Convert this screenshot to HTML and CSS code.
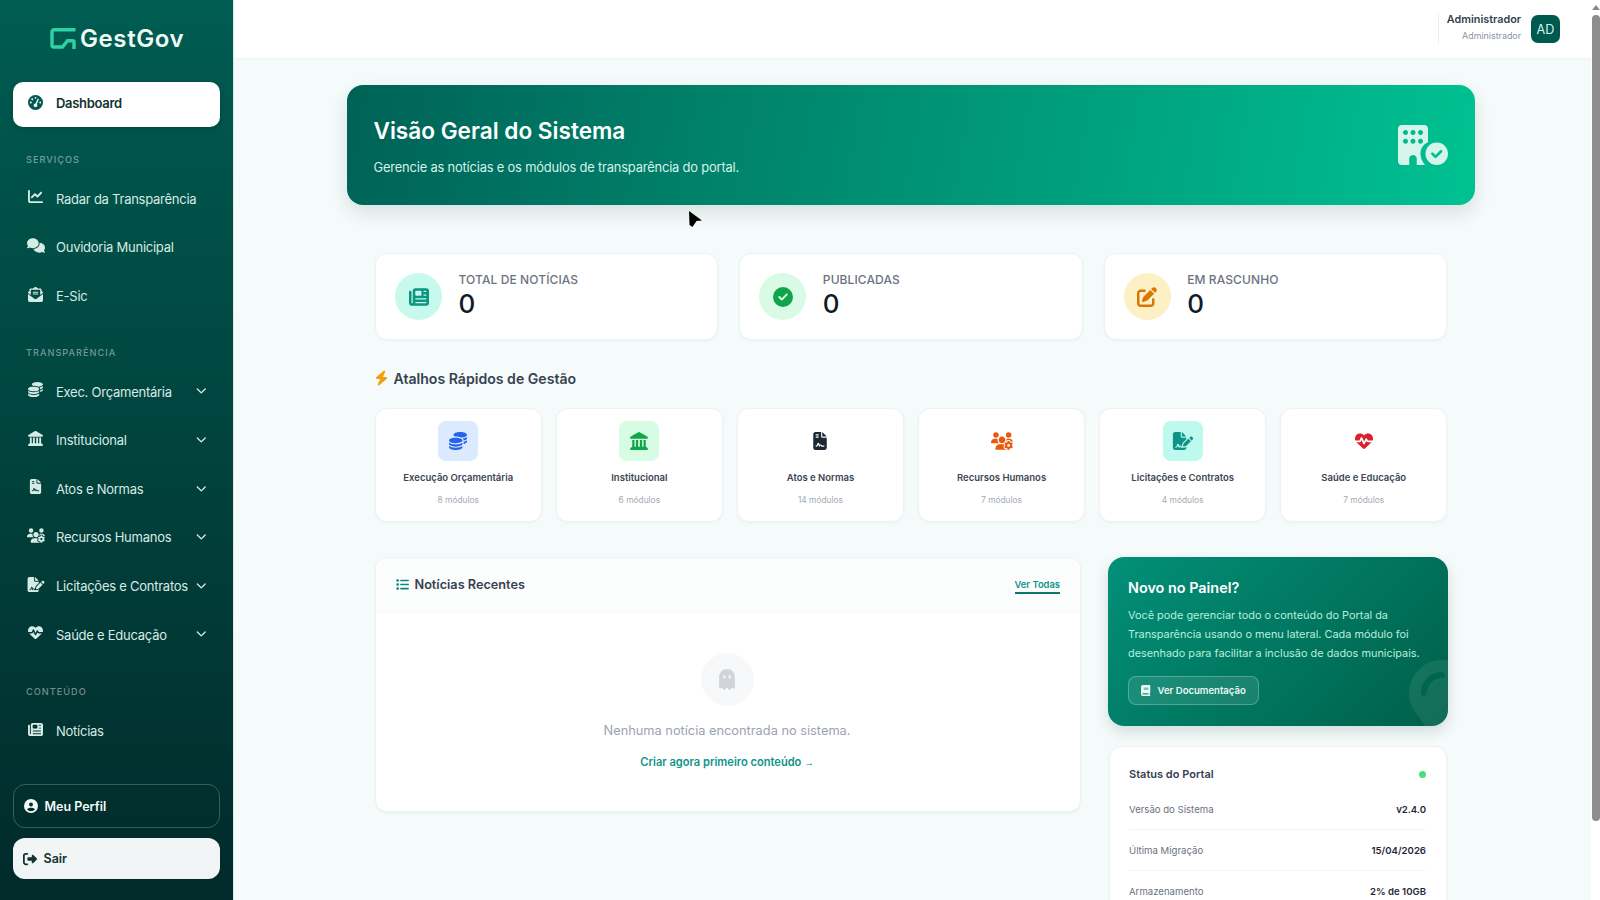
FILE: index.html
```html
<!DOCTYPE html>
<html lang="pt-BR">
<head>
<meta charset="utf-8">
<title>GestGov</title>
<link rel="stylesheet" href="styles.css">
</head>
<body>
<svg class="defs" aria-hidden="true">
<symbol id="i-gauge" viewBox="0 0 512 512"><path d="M0 256a256 256 0 1 1 512 0A256 256 0 1 1 0 256zM288 96a32 32 0 1 0 -64 0 32 32 0 1 0 64 0zM256 416c35.3 0 64-28.7 64-64c0-17.4-6.9-33.1-18.1-44.6L366 161.7c5.3-12.1-.2-26.3-12.3-31.6s-26.3 .2-31.6 12.3L257.9 288c-.6 0-1.3 0-1.9 0c-35.3 0-64 28.7-64 64s28.7 64 64 64zM176 144a32 32 0 1 0 -64 0 32 32 0 1 0 64 0zM96 288a32 32 0 1 0 0-64 32 32 0 1 0 0 64zm352-32a32 32 0 1 0 -64 0 32 32 0 1 0 64 0z"/></symbol>
<symbol id="i-chart" viewBox="0 0 512 512"><path d="M64 64c0-17.7-14.3-32-32-32S0 46.3 0 64V400c0 44.2 35.8 80 80 80H480c17.7 0 32-14.3 32-32s-14.3-32-32-32H80c-8.8 0-16-7.2-16-16V64zm406.6 86.6c12.5-12.5 12.5-32.8 0-45.3s-32.8-12.5-45.3 0L320 210.7l-57.4-57.4c-12.5-12.5-32.8-12.5-45.3 0l-112 112c-12.5 12.5-12.5 32.8 0 45.3s32.8 12.5 45.3 0L240 221.3l57.4 57.4c12.5 12.5 32.8 12.5 45.3 0l128-128z"/></symbol>
<symbol id="i-comments" viewBox="0 0 640 512"><path d="M208 352c114.9 0 208-78.8 208-176S322.9 0 208 0S0 78.8 0 176c0 38.6 14.7 74.3 39.6 103.4c-3.5 9.4-8.7 17.7-14.2 24.7c-4.8 6.2-9.7 11-13.3 14.3c-1.8 1.6-3.3 2.9-4.3 3.7c-.5 .4-.9 .7-1.1 .8l-.2 .2 0 0 0 0C1 327.2-1.4 334.4 .8 340.9S9.1 352 16 352c21.8 0 43.8-5.6 62.1-12.5c9.2-3.5 17.8-7.4 25.3-11.4C134.1 343.3 169.8 352 208 352zM448 176c0 112.3-99.1 196.9-216.5 207C255.8 457.4 336.4 512 432 512c38.2 0 73.9-8.7 104.7-23.9c7.5 4 16 7.9 25.2 11.4c18.3 6.9 40.3 12.5 62.1 12.5c6.9 0 13.1-4.5 15.2-11.1c2.1-6.6-.2-13.8-5.8-17.9l0 0 0 0-.2-.2c-.2-.2-.6-.4-1.1-.8c-1-.8-2.5-2-4.3-3.7c-3.6-3.3-8.5-8.1-13.3-14.3c-5.5-7-10.7-15.4-14.2-24.7c24.9-29 39.6-64.7 39.6-103.4c0-92.8-84.9-168.9-192.6-175.5c.4 5.1 .6 10.3 .6 15.5z"/></symbol>
<symbol id="i-envelope" viewBox="0 0 512 512"><path d="M215.4 96H144 107.8 96v8.8V144v40.4 89L.2 202.5c1.6-18.1 10.9-34.9 25.7-45.8L48 140.3V96c0-26.5 21.5-48 48-48h76.6l49.9-36.9C232.2 3.9 243.9 0 256 0s23.8 3.9 33.5 11L339.4 48H416c26.5 0 48 21.5 48 48v44.3l22.1 16.4c14.8 10.9 24.1 27.7 25.7 45.8L416 273.4v-89V144 104.8 96H404.2 368 296.6 215.4zM0 448V242.1L217.6 403.3c11.1 8.2 24.6 12.7 38.4 12.7s27.3-4.4 38.4-12.7L512 242.1V448v0c0 35.3-28.7 64-64 64H64c-35.3 0-64-28.7-64-64v0zM176 160H336c8.8 0 16 7.2 16 16s-7.2 16-16 16H176c-8.8 0-16-7.2-16-16s7.2-16 16-16zm0 64H336c8.8 0 16 7.2 16 16s-7.2 16-16 16H176c-8.8 0-16-7.2-16-16s7.2-16 16-16z"/></symbol>
<symbol id="i-coins" viewBox="0 0 512 512"><path d="M512 80c0 18-14.3 34.6-38.4 48c-29.1 16.1-72.5 27.5-122.3 30.9c-3.7-1.8-7.4-3.5-11.3-5C300.6 137.4 248.2 128 192 128c-8.3 0-16.4 .2-24.5 .6l-1.1-.6C142.3 114.6 128 98 128 80c0-44.2 86-80 192-80S512 35.8 512 80zM160.7 161.1c10.2-.7 20.7-1.1 31.3-1.1c62.2 0 117.4 12.3 152.5 31.4C369.3 204.9 384 221.7 384 240c0 4-.7 7.9-2.1 11.7c-4.6 13.2-17 25.3-35 35.5c0 0 0 0 0 0c-.1 .1-.3 .1-.4 .2l0 0 0 0c-.3 .2-.6 .3-.9 .5c-35 19.4-90.8 32-153.6 32c-59.6 0-112.9-11.3-148.2-29.1c-1.9-.9-3.7-1.9-5.5-2.9C14.3 274.6 0 258 0 240c0-34.8 53.4-64.5 128-75.4c10.5-1.5 21.4-2.7 32.7-3.5zM416 240c0-21.9-10.6-39.9-24.1-53.4c28.3-4.4 54.2-11.4 76.2-20.5c16.3-6.8 31.5-15.2 43.9-25.5V176c0 19.3-16.5 37.1-43.8 50.9c-14.6 7.4-32.4 13.7-52.4 18.5c.1-1.8 .2-3.5 .2-5.3zm-32 96c0 18-14.3 34.6-38.4 48c-1.8 1-3.6 1.9-5.5 2.9C304.9 404.7 251.6 416 192 416c-62.8 0-118.6-12.6-153.6-32C14.3 370.6 0 354 0 336V300.6c12.5 10.3 27.6 18.7 43.9 25.5C83.4 342.6 135.8 352 192 352s108.6-9.4 148.1-25.9c7.8-3.2 15.3-6.9 22.4-10.9c6.1-3.4 11.8-7.2 17.2-11.2c1.5-1.1 2.9-2.3 4.3-3.4V304v5.7V336zm32 0V304 278.1c19-4.2 36.5-9.5 52.1-16c16.3-6.8 31.5-15.2 43.9-25.5V272c0 10.5-5 21-14.9 30.9c-16.3 16.3-45 29.7-81.3 38.4c.1-1.7 .2-3.5 .2-5.3zM192 448c56.2 0 108.6-9.4 148.1-25.9c16.3-6.8 31.5-15.2 43.9-25.5V432c0 44.2-86 80-192 80S0 476.2 0 432V396.6c12.5 10.3 27.6 18.7 43.9 25.5C83.4 438.6 135.8 448 192 448z"/></symbol>
<symbol id="i-landmark" viewBox="0 0 512 512"><path d="M240.1 4.2c9.8-5.6 21.9-5.6 31.8 0l171.8 98.1L448 104l0 .9 47.9 27.4c12.6 7.2 18.8 22 15.1 36s-16.4 23.8-30.9 23.8H32c-14.5 0-27.2-9.8-30.9-23.8s2.5-28.8 15.1-36L64 104.9V104l4.4-1.6L240.1 4.2zM64 224h64V416h40V224h64V416h48V224h64V416h40V224h64V420.3c.6 .3 1.2 .7 1.8 1.1l48 32c11.7 7.8 17 22.4 12.9 35.9S494.1 512 480 512H32c-14.1 0-26.5-9.2-30.6-22.7s1.1-28.1 12.9-35.9l48-32c.6-.4 1.2-.7 1.8-1.1V224z"/></symbol>
<symbol id="i-contract" viewBox="0 0 384 512"><path d="M64 0C28.7 0 0 28.7 0 64V448c0 35.3 28.7 64 64 64H320c35.3 0 64-28.7 64-64V160H256c-17.7 0-32-14.3-32-32V0H64zM256 0V128H384L256 0zM80 64h64c8.8 0 16 7.2 16 16s-7.2 16-16 16H80c-8.8 0-16-7.2-16-16s7.2-16 16-16zm0 64h64c8.8 0 16 7.2 16 16s-7.2 16-16 16H80c-8.8 0-16-7.2-16-16s7.2-16 16-16zm54.2 253.8c-6.1 20.3-24.8 34.2-46 34.2H80c-8.8 0-16-7.2-16-16s7.2-16 16-16h8.2c7.1 0 13.3-4.6 15.3-11.4l14.9-49.5c3.4-11.3 13.8-19.1 25.6-19.1s22.2 7.7 25.6 19.1l11.6 38.6c7.4-6.2 16.8-9.7 26.8-9.7c15.9 0 30.4 9 37.5 23.2l4.4 8.8H304c8.8 0 16 7.2 16 16s-7.2 16-16 16H240c-6.1 0-11.6-3.4-14.3-8.8l-8.8-17.7c-1.7-3.4-5.1-5.5-8.8-5.5s-7.2 2.1-8.8 5.5l-8.8 17.7c-2.9 5.9-9.2 9.4-15.7 8.8s-12.1-5.1-13.9-11.3L144 349l-9.8 32.8z"/></symbol>
<symbol id="i-users" viewBox="0 0 640 512"><path d="M144 160A80 80 0 1 0 144 0a80 80 0 1 0 0 160zm368 0A80 80 0 1 0 512 0a80 80 0 1 0 0 160zM0 298.7C0 310.4 9.6 320 21.3 320H234.7c.2 0 .4 0 .7 0c-26.6-23.5-43.3-57.8-43.3-96c0-7.6 .7-15 1.9-22.3c-13.6-6.3-28.7-9.7-44.6-9.7H106.7C47.8 192 0 239.8 0 298.7zM320 320c24 0 45.9-8.8 62.7-23.3c2.5-3.7 5.2-7.3 8-10.7c2.7-3.3 5.7-6.1 9-8.3C410 262.3 416 243.9 416 224c0-53-43-96-96-96s-96 43-96 96s43 96 96 96zm65.4 60.2c-10.3-5.9-18.1-16.2-20.8-28.2H261.3C187.7 352 128 411.7 128 485.3c0 14.7 11.9 26.7 26.7 26.7H455.2c-2.1-5.2-3.2-10.9-3.2-16.4v-3c-1.3-.7-2.7-1.5-4-2.3l-2.6 1.5c-16.8 9.7-40.5 8-54.7-9.7c-4.5-5.6-8.6-11.5-12.4-17.6l-.1-.2-.1-.2-2.4-4.1-.1-.2-.1-.2c-3.4-6.2-6.4-12.6-9-19.3c-8.2-21.2 2.2-42.6 19-52.3l2.7-1.5c0-.8 0-1.5 0-2.3s0-1.5 0-2.3l-2.7-1.5zM533.3 192H490.7c-15.9 0-31 3.5-44.6 9.7c1.3 7.2 1.9 14.7 1.9 22.3c0 17.4-3.5 33.9-9.7 49c2.5 .9 4.9 2 7.1 3.3l2.6 1.5c1.3-.8 2.6-1.6 4-2.3v-3c0-19.4 13.3-39.1 35.8-42.6c7.9-1.2 16-1.9 24.2-1.9s16.3 .6 24.2 1.9c22.5 3.5 35.8 23.2 35.8 42.6v3c1.3 .7 2.7 1.5 4 2.3l2.6-1.5c16.8-9.7 40.5-8 54.7 9.7c2.3 2.8 4.5 5.8 6.6 8.7c-2.1-57.1-49-102.7-106.6-102.7zm91.3 163.9c6.3-3.6 9.5-11.1 6.8-18c-2.1-5.5-4.6-10.8-7.4-15.9l-2.3-4c-3.1-5.1-6.5-9.9-10.2-14.5c-4.6-5.7-12.7-6.7-19-3l-2.9 1.7c-9.2 5.3-20.4 4-29.6-1.3s-16.1-14.5-16.1-25.1v-3.4c0-7.3-4.9-13.8-12.1-14.9c-6.5-1-13.1-1.5-19.9-1.5s-13.4 .5-19.9 1.5c-7.2 1.1-12.1 7.6-12.1 14.9v3.4c0 10.6-6.9 19.8-16.1 25.1s-20.4 6.6-29.6 1.3l-2.9-1.7c-6.3-3.6-14.4-2.6-19 3c-3.7 4.6-7.1 9.5-10.2 14.6l-2.3 3.9c-2.8 5.1-5.3 10.4-7.4 15.9c-2.6 6.8 .5 14.3 6.8 17.9l2.9 1.7c9.2 5.3 13.7 15.8 13.7 26.4s-4.5 21.1-13.7 26.4l-3 1.7c-6.3 3.6-9.5 11.1-6.8 17.9c2.1 5.5 4.6 10.7 7.4 15.8l2.4 4.1c3 5.1 6.4 9.9 10.1 14.5c4.6 5.7 12.7 6.7 19 3l2.9-1.7c9.2-5.3 20.4-4 29.6 1.3s16.1 14.5 16.1 25.1v3.4c0 7.3 4.9 13.8 12.1 14.9c6.5 1 13.1 1.5 19.9 1.5s13.4-.5 19.9-1.5c7.2-1.1 12.1-7.6 12.1-14.9v-3.4c0-10.6 6.9-19.8 16.1-25.1s20.4-6.6 29.6-1.3l2.9 1.7c6.3 3.6 14.4 2.6 19-3c3.7-4.6 7.1-9.4 10.1-14.5l2.4-4.2c2.8-5.1 5.3-10.3 7.4-15.8c2.6-6.8-.5-14.3-6.8-17.9l-3-1.7c-9.2-5.3-13.7-15.8-13.7-26.4s4.5-21.1 13.7-26.4l3-1.7zM472 384a40 40 0 1 1 80 0 40 40 0 1 1 -80 0z"/></symbol>
<symbol id="i-signature" viewBox="0 0 576 512"><path d="M64 0C28.7 0 0 28.7 0 64V448c0 35.3 28.7 64 64 64H320c35.3 0 64-28.7 64-64V428.7c-2.7 1.1-5.4 2-8.2 2.7l-60.1 15c-3 .7-6 1.2-9 1.4c-.9 .1-1.8 .2-2.7 .2H240c-6.1 0-11.6-3.4-14.3-8.8l-8.8-17.7c-1.7-3.4-5.1-5.5-8.8-5.5s-7.2 2.1-8.8 5.5l-8.8 17.7c-2.9 5.9-9.2 9.4-15.7 8.8s-12.1-5.1-13.9-11.3L144 381l-9.8 32.8c-6.1 20.3-24.8 34.2-46 34.2H80c-8.8 0-16-7.2-16-16s7.2-16 16-16h8.2c7.1 0 13.3-4.6 15.3-11.4l14.9-49.5c3.4-11.3 13.8-19.1 25.6-19.1s22.2 7.7 25.6 19.1l11.6 38.6c7.4-6.2 16.8-9.7 26.8-9.7c15.9 0 30.4 9 37.5 23.2l4.4 8.8h8.9c-3.1-8.8-3.7-18.4-1.4-27.8l15-60.1c2.8-11.3 8.6-21.5 16.9-29.7L384 203.6V160H256c-17.7 0-32-14.3-32-32V0H64zM256 0V128H384L256 0zM549.8 139.7c-15.6-15.6-40.9-15.6-56.6 0l-29.4 29.4 71 71 29.4-29.4c15.6-15.6 15.6-40.9 0-56.6l-14.4-14.4zM311.9 321c-4.1 4.1-7 9.2-8.4 14.9l-15 60.1c-1.4 5.5 .2 11.2 4.2 15.2s9.7 5.6 15.2 4.2l60.1-15c5.6-1.4 10.8-4.3 14.9-8.4L512.1 262.7l-71-71L311.9 321z"/></symbol>
<symbol id="i-heart" viewBox="0 0 512 512"><path d="M228.3 469.1L47.6 300.4c-4.2-3.9-8.2-8.1-11.9-12.4h87c22.6 0 43-13.6 51.7-34.5l10.5-25.2 49.3 109.5c3.8 8.5 12.1 14 21.4 14.1s17.8-5 22-13.3L320 253.7l1.7 3.4c9.5 19 28.9 31 50.1 31H476.3c-3.7 4.3-7.7 8.5-11.9 12.4L283.7 469.1c-7.5 7-17.4 10.9-27.7 10.9s-20.2-3.9-27.7-10.9zM503.7 240h-132c-3 0-5.8-1.7-7.2-4.4l-23.2-46.3c-4.1-8.1-12.4-13.3-21.5-13.3s-17.4 5.1-21.5 13.3l-41.4 82.8L205.9 158.2c-3.9-8.7-12.7-14.3-22.2-14.1s-18.1 5.9-21.8 14.8l-31.8 76.3c-1.2 3-4.2 4.9-7.4 4.9H16c-2.6 0-5 .4-7.3 1.1C3 225.2 0 208.2 0 190.9v-5.8c0-69.9 50.5-129.5 119.4-141C165 36.5 211.4 51.4 244 84l12 12 12-12c32.6-32.6 79-47.5 124.6-39.9C461.5 55.6 512 115.2 512 185.1v5.8c0 16.9-2.8 33.5-8.3 49.1z"/></symbol>
<symbol id="i-news" viewBox="0 0 512 512"><path d="M96 96c0-35.3 28.7-64 64-64H448c35.3 0 64 28.7 64 64V416c0 35.3-28.7 64-64 64H80c-44.2 0-80-35.8-80-80V128c0-17.7 14.3-32 32-32s32 14.3 32 32V400c0 8.8 7.2 16 16 16s16-7.2 16-16V96zm64 24v80c0 13.3 10.7 24 24 24H296c13.3 0 24-10.7 24-24V120c0-13.3-10.7-24-24-24H184c-13.3 0-24 10.7-24 24zm208-8c0 8.8 7.2 16 16 16h48c8.8 0 16-7.2 16-16s-7.2-16-16-16H384c-8.8 0-16 7.2-16 16zm0 96c0 8.8 7.2 16 16 16h48c8.8 0 16-7.2 16-16s-7.2-16-16-16H384c-8.8 0-16 7.2-16 16zM160 304c0 8.8 7.2 16 16 16H432c8.8 0 16-7.2 16-16s-7.2-16-16-16H176c-8.8 0-16 7.2-16 16zm0 96c0 8.8 7.2 16 16 16H432c8.8 0 16-7.2 16-16s-7.2-16-16-16H176c-8.8 0-16 7.2-16 16z"/></symbol>
<symbol id="i-check" viewBox="0 0 512 512"><path d="M256 512A256 256 0 1 0 256 0a256 256 0 1 0 0 512zM369 209L241 337c-9.4 9.4-24.6 9.4-33.9 0l-64-64c-9.4-9.4-9.4-24.6 0-33.9s24.6-9.4 33.9 0l47 47L335 175c9.4-9.4 24.6-9.4 33.9 0s9.4 24.6 0 33.9z"/></symbol>
<symbol id="i-pen" viewBox="0 0 512 512"><path d="M471.6 21.7c-21.9-21.9-57.3-21.9-79.2 0L362.3 51.7l97.9 97.9 30.1-30.1c21.9-21.9 21.9-57.3 0-79.2L471.6 21.7zm-299.2 220c-6.1 6.1-10.8 13.6-13.5 21.9l-29.6 88.8c-2.9 8.6-.6 18.1 5.8 24.6s15.9 8.7 24.6 5.8l88.8-29.6c8.2-2.7 15.7-7.4 21.9-13.5L437.7 172.3 339.7 74.3 172.4 241.7zM96 64C43 64 0 107 0 160V416c0 53 43 96 96 96H352c53 0 96-43 96-96V320c0-17.7-14.3-32-32-32s-32 14.3-32 32v96c0 17.7-14.3 32-32 32H96c-17.7 0-32-14.3-32-32V160c0-17.7 14.3-32 32-32h96c17.7 0 32-14.3 32-32s-14.3-32-32-32H96z"/></symbol>
<symbol id="i-bolt" viewBox="0 0 448 512"><path d="M349.4 44.6c5.9-13.7 1.5-29.7-10.6-38.5s-28.6-8-39.9 1.8l-256 224c-10 8.8-13.6 22.9-8.9 35.3S50.7 288 64 288H175.5L98.6 467.4c-5.9 13.7-1.5 29.7 10.6 38.5s28.6 8 39.9-1.8l256-224c10-8.8 13.6-22.9 8.9-35.3s-16.6-20.7-30-20.7H272.5L349.4 44.6z"/></symbol>
<symbol id="i-list" viewBox="0 0 512 512"><path d="M40 48C26.7 48 16 58.7 16 72v48c0 13.3 10.7 24 24 24H88c13.3 0 24-10.7 24-24V72c0-13.3-10.7-24-24-24H40zM192 64c-17.7 0-32 14.3-32 32s14.3 32 32 32H480c17.7 0 32-14.3 32-32s-14.3-32-32-32H192zm0 160c-17.7 0-32 14.3-32 32s14.3 32 32 32H480c17.7 0 32-14.3 32-32s-14.3-32-32-32H192zm0 160c-17.7 0-32 14.3-32 32s14.3 32 32 32H480c17.7 0 32-14.3 32-32s-14.3-32-32-32H192zM16 232v48c0 13.3 10.7 24 24 24H88c13.3 0 24-10.7 24-24V232c0-13.3-10.7-24-24-24H40c-13.3 0-24 10.7-24 24zM40 368c-13.3 0-24 10.7-24 24v48c0 13.3 10.7 24 24 24H88c13.3 0 24-10.7 24-24V392c0-13.3-10.7-24-24-24H40z"/></symbol>
<symbol id="i-ghost" viewBox="0 0 384 512"><path d="M40.1 467.1l-11.2 9c-3.2 2.5-7.1 3.9-11.1 3.9C8 480 0 472 0 462.2V192C0 86 86 0 192 0S384 86 384 192V462.2c0 9.8-8 17.8-17.8 17.8c-4 0-7.9-1.4-11.1-3.9l-11.2-9c-13.4-10.7-32.8-9-44.1 3.9L269.3 506c-3.3 3.8-8.2 6-13.3 6s-9.9-2.2-13.3-6l-26.6-30.5c-12.7-14.6-35.4-14.6-48.2 0L141.3 506c-3.3 3.8-8.2 6-13.3 6s-9.9-2.2-13.3-6L84.2 471c-11.3-12.9-30.7-14.6-44.1-3.9zM160 192a32 32 0 1 0 -64 0 32 32 0 1 0 64 0zm96 32a32 32 0 1 0 0-64 32 32 0 1 0 0 64z"/></symbol>
<symbol id="i-book" viewBox="0 0 448 512"><path d="M96 0C43 0 0 43 0 96V416c0 53 43 96 96 96H384h32c17.7 0 32-14.3 32-32s-14.3-32-32-32V384c17.7 0 32-14.3 32-32V32c0-17.7-14.3-32-32-32H384 96zm0 384H352v64H96c-17.7 0-32-14.3-32-32s14.3-32 32-32zm32-240c0-8.8 7.2-16 16-16H336c8.8 0 16 7.2 16 16s-7.2 16-16 16H144c-8.8 0-16-7.2-16-16zm16 48H336c8.8 0 16 7.2 16 16s-7.2 16-16 16H144c-8.8 0-16-7.2-16-16s7.2-16 16-16z"/></symbol>
<symbol id="i-user" viewBox="0 0 512 512"><path d="M399 384.2C376.9 345.8 335.4 320 288 320H224c-47.4 0-88.9 25.8-111 64.2c35.2 39.2 86.2 63.8 143 63.8s107.8-24.7 143-63.8zM0 256a256 256 0 1 1 512 0A256 256 0 1 1 0 256zm256 16a72 72 0 1 0 0-144 72 72 0 1 0 0 144z"/></symbol>
<symbol id="i-logout" viewBox="0 0 512 512"><path d="M377.9 105.9L500.7 228.7c7.2 7.2 11.3 17.1 11.3 27.3s-4.1 20.1-11.3 27.3L377.9 406.1c-6.4 6.4-15 9.9-24 9.9c-18.7 0-33.9-15.2-33.9-33.9l0-62.1-128 0c-17.7 0-32-14.3-32-32l0-64c0-17.7 14.3-32 32-32l128 0 0-62.1c0-18.7 15.2-33.9 33.9-33.9c9 0 17.6 3.6 24 9.9zM160 96L96 96c-17.7 0-32 14.3-32 32l0 256c0 17.7 14.3 32 32 32l64 0c17.7 0 32 14.3 32 32s-14.3 32-32 32l-64 0c-53 0-96-43-96-96L0 128C0 75 43 32 96 32l64 0c17.7 0 32 14.3 32 32s-14.3 32-32 32z"/></symbol>
<symbol id="i-chevron" viewBox="0 0 512 512"><path d="M233.4 406.6c12.5 12.5 32.8 12.5 45.3 0l192-192c12.5-12.5 12.5-32.8 0-45.3s-32.8-12.5-45.3 0L256 338.7 86.6 169.4c-12.5-12.5-32.8-12.5-45.3 0s-12.5 32.8 0 45.3l192 192z"/></symbol>
<symbol id="i-bulb" viewBox="0 0 384 512"><path d="M272 384c9.6-31.9 29.5-59.1 49.2-86.2l0 0c5.2-7.1 10.4-14.2 15.4-21.4c19.8-28.5 31.4-63 31.4-100.3C368 78.8 289.2 0 192 0S16 78.8 16 176c0 37.3 11.6 71.9 31.4 100.3c5 7.2 10.2 14.3 15.4 21.4l0 0c19.8 27.1 39.7 54.4 49.2 86.2H272zM192 512c44.2 0 80-35.8 80-80V416H112v16c0 44.2 35.8 80 80 80zM112 176c0 8.8-7.2 16-16 16s-16-7.2-16-16c0-61.9 50.1-112 112-112c8.8 0 16 7.2 16 16s-7.2 16-16 16c-44.2 0-80 35.8-80 80z"/></symbol>
<symbol id="i-building" viewBox="0 0 640 512"><path fill-rule="evenodd" d="M48 0C21.5 0 0 21.5 0 48V464c0 26.5 21.5 48 48 48h96V432c0-26.5 21.5-48 48-48s48 21.5 48 48v80h104c-18-30-56-72-56-144c0-66 38-122 96-146V48c0-26.5-21.5-48-48-48H48zM96 64a32 32 0 1 0 0.1 0zM192 64a32 32 0 1 0 0.1 0zM288 64a32 32 0 1 0 0.1 0zM96 176a32 32 0 1 0 0.1 0zM192 176a32 32 0 1 0 0.1 0zM288 176a32 32 0 1 0 0.1 0z"/><path d="M496 512a144 144 0 1 0 0-288 144 144 0 1 0 0 288zm67.3-164.7l-72 72c-6.2 6.2-16.4 6.2-22.6 0l-40-40c-6.2-6.2-6.2-16.4 0-22.6s16.4-6.2 22.6 0L480 385.4l60.7-60.7c6.2-6.2 16.4-6.2 22.6 0s6.2 16.4 0 22.6z"/></symbol>
</svg>

<div class="app">
  <aside class="sidebar">
    <div class="brand">
      <svg class="brand-mark" viewBox="0 0 26 21"><path d="M25.5 1.8H4a2 2 0 0 0-2 2V17a2 2 0 0 0 2 2h8.5l5-6.2H22.5a1.5 1.5 0 0 1 1.5 1.5V21" fill="none" stroke="#2ed3a4" stroke-width="3.4"/></svg>
      <span class="brand-name">GestGov</span>
    </div>
    <a class="nav-item active"><span class="nav-icon"><svg class="ico ico-15"><use href="#i-gauge"/></svg></span><span class="nav-text">Dashboard</span></a>
    <div class="nav-label">Serviços</div>
    <a class="nav-item"><span class="nav-icon"><svg class="ico ico-15"><use href="#i-chart"/></svg></span><span class="nav-text">Radar da Transparência</span></a>
    <a class="nav-item"><span class="nav-icon"><svg class="ico ico-wide"><use href="#i-comments"/></svg></span><span class="nav-text">Ouvidoria Municipal</span></a>
    <a class="nav-item"><span class="nav-icon"><svg class="ico ico-15"><use href="#i-envelope"/></svg></span><span class="nav-text">E-Sic</span></a>
    <div class="nav-label">Transparência</div>
    <a class="nav-item"><span class="nav-icon"><svg class="ico ico-15"><use href="#i-coins"/></svg></span><span class="nav-text">Exec. Orçamentária</span><svg class="chev"><use href="#i-chevron"/></svg></a>
    <a class="nav-item"><span class="nav-icon"><svg class="ico ico-15"><use href="#i-landmark"/></svg></span><span class="nav-text">Institucional</span><svg class="chev"><use href="#i-chevron"/></svg></a>
    <a class="nav-item"><span class="nav-icon"><svg class="ico ico-15"><use href="#i-contract"/></svg></span><span class="nav-text">Atos e Normas</span><svg class="chev"><use href="#i-chevron"/></svg></a>
    <a class="nav-item"><span class="nav-icon"><svg class="ico ico-wide"><use href="#i-users"/></svg></span><span class="nav-text">Recursos Humanos</span><svg class="chev"><use href="#i-chevron"/></svg></a>
    <a class="nav-item"><span class="nav-icon"><svg class="ico ico-wide"><use href="#i-signature"/></svg></span><span class="nav-text">Licitações e Contratos</span><svg class="chev"><use href="#i-chevron"/></svg></a>
    <a class="nav-item"><span class="nav-icon"><svg class="ico ico-15"><use href="#i-heart"/></svg></span><span class="nav-text">Saúde e Educação</span><svg class="chev"><use href="#i-chevron"/></svg></a>
    <div class="nav-label nav-label-last">Conteúdo</div>
    <a class="nav-item"><span class="nav-icon"><svg class="ico ico-15"><use href="#i-news"/></svg></span><span class="nav-text">Notícias</span></a>
    <div class="side-foot">
      <a class="foot-btn profile"><svg class="ico ico-14"><use href="#i-user"/></svg>Meu Perfil</a>
      <a class="foot-btn logout"><svg class="ico ico-14"><use href="#i-logout"/></svg>Sair</a>
    </div>
  </aside>

  <div class="main">
    <header class="topbar">
      <div class="user">
        <div class="user-names">
          <div class="user-name">Administrador</div>
          <div class="user-role">Administrador</div>
        </div>
        <div class="avatar">AD</div>
      </div>
    </header>

    <main class="page">
      <section class="hero">
        <div class="hero-copy">
          <h1 class="hero-title">Visão Geral do Sistema</h1>
          <p class="hero-sub">Gerencie as notícias e os módulos de transparência do portal.</p>
        </div>
        <svg class="hero-icon"><use href="#i-building"/></svg>
      </section>

      <div class="content">
        <div class="stats">
          <div class="stat">
            <div class="stat-circle teal"><svg class="ico ico-20"><use href="#i-news"/></svg></div>
            <div class="stat-body"><div class="stat-label">Total de Notícias</div><div class="stat-value">0</div></div>
          </div>
          <div class="stat">
            <div class="stat-circle green"><svg class="ico ico-20"><use href="#i-check"/></svg></div>
            <div class="stat-body"><div class="stat-label">Publicadas</div><div class="stat-value">0</div></div>
          </div>
          <div class="stat">
            <div class="stat-circle amber"><svg class="ico ico-20"><use href="#i-pen"/></svg></div>
            <div class="stat-body"><div class="stat-label">Em Rascunho</div><div class="stat-value">0</div></div>
          </div>
        </div>

        <h2 class="section-title"><svg class="bolt"><use href="#i-bolt"/></svg>Atalhos Rápidos de Gestão</h2>

        <div class="shortcuts">
          <a class="shortcut"><div class="sc-icon sc-blue"><svg class="ico ico-18"><use href="#i-coins"/></svg></div><div class="sc-title">Execução Orçamentária</div><div class="sc-sub">8 módulos</div></a>
          <a class="shortcut"><div class="sc-icon sc-green"><svg class="ico ico-18"><use href="#i-landmark"/></svg></div><div class="sc-title">Institucional</div><div class="sc-sub">6 módulos</div></a>
          <a class="shortcut"><div class="sc-icon sc-dark"><svg class="ico ico-18"><use href="#i-contract"/></svg></div><div class="sc-title">Atos e Normas</div><div class="sc-sub">14 módulos</div></a>
          <a class="shortcut"><div class="sc-icon sc-orange"><svg class="ico ico-sc-wide"><use href="#i-users"/></svg></div><div class="sc-title">Recursos Humanos</div><div class="sc-sub">7 módulos</div></a>
          <a class="shortcut"><div class="sc-icon sc-teal"><svg class="ico ico-sc-wide"><use href="#i-signature"/></svg></div><div class="sc-title">Licitações e Contratos</div><div class="sc-sub">4 módulos</div></a>
          <a class="shortcut"><div class="sc-icon sc-red"><svg class="ico ico-18"><use href="#i-heart"/></svg></div><div class="sc-title">Saúde e Educação</div><div class="sc-sub">7 módulos</div></a>
        </div>

        <div class="lower">
          <section class="news">
            <div class="news-head">
              <div class="news-title"><svg class="list-ico"><use href="#i-list"/></svg>Notícias Recentes</div>
              <a class="see-all">Ver Todas</a>
            </div>
            <div class="news-empty">
              <div class="ghost-circle"><svg class="ghost"><use href="#i-ghost"/></svg></div>
              <p class="empty-text">Nenhuma notícia encontrada no sistema.</p>
              <a class="empty-link">Criar agora primeiro conteúdo <span class="arrow">→</span></a>
            </div>
          </section>

          <div class="aside">
            <section class="promo">
              <h3 class="promo-title">Novo no Painel?</h3>
              <p class="promo-text">Você pode gerenciar todo o conteúdo do Portal da Transparência usando o menu lateral. Cada módulo foi desenhado para facilitar a inclusão de dados municipais.</p>
              <a class="promo-btn"><svg class="promo-btn-ico"><use href="#i-book"/></svg>Ver Documentação</a>
              <svg class="promo-bulb"><use href="#i-bulb"/></svg>
            </section>
            <section class="status">
              <div class="status-head"><span class="status-title">Status do Portal</span><span class="status-dot"></span></div>
              <div class="status-row"><span class="status-key">Versão do Sistema</span><span class="status-val">v2.4.0</span></div>
              <div class="status-row"><span class="status-key">Última Migração</span><span class="status-val">15/04/2026</span></div>
              <div class="status-row"><span class="status-key">Armazenamento</span><span class="status-val">2% de 10GB</span></div>
            </section>
          </div>
        </div>
      </div>
    </main>
  </div>

  <div class="scrollbar">
    <div class="scroll-up"></div>
    <div class="scroll-thumb"></div>
  </div>
</div>

<svg class="cursor" viewBox="0 0 13 16"><path d="M0 0 L13 9.5 L7.5 10 L3.5 16 L0.5 14 Z" fill="#000"/></svg>
</body>
</html>
```

FILE: styles.css
```css
* { box-sizing: border-box; }
html, body { margin: 0; height: 100%; }
body {
  font-family: "Inter", "Noto Sans", sans-serif;
  color: #1f2937;
  background: #f5fafa;
  overflow: hidden;
}
a { color: inherit; text-decoration: none; display: block; }
h1, h2, h3, p { margin: 0; }
.defs { position: absolute; width: 0; height: 0; overflow: hidden; }
.ico { fill: currentColor; flex: none; display: block; }
.ico-14 { width: 14px; height: 14px; }
.ico-15 { width: 15px; height: 15px; }
.ico-18 { width: 18px; height: 18px; }
.ico-20 { width: 20px; height: 20px; }
.ico-wide { width: 18px; height: 15px; }
.ico-sc-wide { width: 22px; height: 18px; }

.app { display: flex; height: 100vh; overflow: hidden; }

/* sidebar */
.sidebar {
  flex: none;
  width: 234px;
  height: 100vh;
  padding: 0 13px 21px;
  display: flex;
  flex-direction: column;
  background: linear-gradient(180deg, #005c51 0%, #012a2a 100%);
  border-right: 1px solid #dde8ea;
  color: #d6ebe5;
}
.brand { display: flex; align-items: center; gap: 4px; height: 82px; padding: 0 0 6px 37px; }
.brand-mark { width: 26px; height: 21px; flex: none; }
.brand-name { font-family: "Inter", sans-serif; font-weight: 600; font-size: 24px; color: #f0fbf7; letter-spacing: 0.6px; }
.nav-item {
  display: flex;
  align-items: center;
  height: 44.6px;
  margin-bottom: 4px;
  padding: 0 14px 0 14px;
  font-size: 13px;
  letter-spacing: -0.25px;
  flex: none;
}
.nav-item.active {
  background: #fff;
  color: #12332f;
  border-radius: 10px;
  font-weight: 600;
  letter-spacing: -0.3px;
  box-shadow: 0 2px 6px rgba(0,0,0,.15);
}
.nav-item.active .nav-icon { color: #00594f; }
.nav-item.active .nav-text { margin-bottom: 2px; }
.nav-icon { width: 17px; margin-right: 12px; display: flex; justify-content: center; flex: none; margin-bottom: 4px; }
.nav-text { flex: 1; white-space: nowrap; }
.chev { width: 10.5px; height: 10.5px; fill: currentColor; flex: none; margin-bottom: 2px; }
.nav-label {
  flex: none;
  height: 14px;
  line-height: 14px;
  margin: 24px 0 9px 13px;
  font-size: 9.2px;
  font-weight: 500;
  letter-spacing: 1px;
  text-transform: uppercase;
  color: rgba(255,255,255,.45);
}
.nav-item.active + .nav-label { margin-top: 22px; margin-bottom: 10px; }
.nav-label-last { margin-bottom: 10px; }
.side-foot { margin-top: auto; display: flex; flex-direction: column; gap: 10px; }
.foot-btn {
  display: flex;
  align-items: center;
  gap: 6.5px;
  padding: 0 10px;
  border-radius: 12px;
  font-size: 12.5px;
  font-weight: 600;
}
.foot-btn.profile { height: 44px; border: 1px solid rgba(255,255,255,.22); color: #f3fbf9; padding-left: 10px; }
.foot-btn.logout { height: 41px; background: #f2f5f5; color: #12332f; padding-left: 10px; }

/* main */
.main { flex: 1; min-width: 0; height: 100vh; overflow: hidden; display: flex; flex-direction: column; background: #f5fafa; }
.topbar {
  flex: none;
  height: 58px;
  background: #fff;
  box-shadow: 0 1px 2px rgba(0,0,0,.04);
  display: flex;
  justify-content: flex-end;
  align-items: center;
  padding-right: 31px;
}
.user { display: flex; align-items: center; gap: 10px; }
.user-names { border-left: 1px solid #e9eeee; padding: 0 0 3px 8px; height: 30px; text-align: right; display: flex; flex-direction: column; justify-content: center; gap: 3px; }
.user-name { font-size: 10.8px; font-weight: 600; color: #374151; line-height: 14px; }
.user-role { font-size: 8.9px; color: #8a94a3; line-height: 12px; }
.avatar { width: 29px; height: 28.5px; border-radius: 7px; background: #00594f; color: #d5f3ea; font-size: 12.6px; display: flex; align-items: center; justify-content: center; }

.page { flex: none; padding: 27px 116px 0 113px; }
.hero {
  height: 120px;
  border-radius: 16px;
  padding: 0 27.5px 0 26.5px;
  display: flex;
  align-items: center;
  justify-content: space-between;
  background: linear-gradient(100deg, #006257 0%, #00c191 100%);
  box-shadow: 0 8px 18px rgba(0,70,60,.13);
  color: #fff;
}
.hero-copy { padding-top: 2.5px; }
.hero-title { font-size: 22.6px; font-weight: 600; line-height: 30px; margin-bottom: 13px; }
.hero-sub { font-size: 12.9px; letter-spacing: -0.18px; color: #d3f2e9; line-height: 18px; }
.hero-icon { width: 50px; height: 40px; fill: #d6f5ea; }

.content { padding: 48px 28px 0; }
.stats { display: grid; grid-template-columns: repeat(3, 1fr); gap: 21px; }
.stat {
  height: 87px;
  background: #fff;
  border-radius: 12px;
  border: 1px solid #edf3f3;
  box-shadow: 0 1px 3px rgba(0,0,0,.04);
  padding: 0 19px;
  display: flex;
  align-items: center;
  gap: 16.5px;
}
.stat-body { margin-bottom: 2px; }
.stat-circle { width: 47px; height: 47px; border-radius: 50%; display: flex; align-items: center; justify-content: center; flex: none; }
.teal { background: #c7f9ec; color: #0c9582; }
.green { background: #d9fbe5; color: #0fa44a; }
.amber { background: #fcf0c4; color: #d97706; }
.stat-label { font-size: 12px; font-weight: 500; color: #6b7280; text-transform: uppercase; line-height: 16px; letter-spacing: 0.1px; }
.stat-value { font-size: 26px; font-weight: 500; color: #111c27; line-height: 30px; margin-top: 1px; }

.section-title {
  display: flex;
  align-items: center;
  gap: 5.5px;
  font-size: 14.1px;
  font-weight: 600;
  color: #374151;
  height: 22px;
  margin: 27px 0 19px;
}
.bolt { width: 13px; height: 16px; fill: #f59e0b; flex: none; }

.shortcuts { display: grid; grid-template-columns: repeat(6, 1fr); gap: 14.6px; }
.shortcut {
  height: 114px;
  background: #fff;
  border-radius: 12px;
  border: 1px solid #edf3f3;
  box-shadow: 0 1px 3px rgba(0,0,0,.04);
  padding-top: 12px;
  display: flex;
  flex-direction: column;
  align-items: center;
}
.sc-icon { width: 40px; height: 40px; border-radius: 8px; display: flex; align-items: center; justify-content: center; }
.sc-blue { background: #dbeafe; color: #2563eb; }
.sc-green { background: #d6fce3; color: #0ea64a; }
.sc-dark { color: #1c2733; }
.sc-orange { color: #ea580c; }
.sc-teal { background: #bdf9ec; color: #0d9488; }
.sc-red { color: #dc1f2e; }
.sc-title { font-size: 9.5px; font-weight: 600; color: #3d4654; margin-top: 10px; line-height: 14px; }
.sc-sub { font-size: 8.4px; color: #a3abb6; margin-top: 8px; line-height: 14px; }

.lower { display: grid; grid-template-columns: 706px 340px; gap: 27px; margin: 35px -1px 0 0; align-items: start; }
.news {
  height: 255px;
  background: #fff;
  border-radius: 12px;
  border: 1px solid #edf3f3;
  box-shadow: 0 1px 3px rgba(0,0,0,.05);
  overflow: hidden;
}
.news-head { height: 56px; background: #fbfdfd; display: flex; align-items: center; justify-content: space-between; padding: 0 20px 0 19.5px; }
.news-title { display: flex; align-items: center; gap: 6px; font-size: 12.7px; font-weight: 600; color: #374151; margin-bottom: 3px; }
.list-ico { width: 13px; height: 13px; fill: #0d8a7c; flex: none; }
.see-all { font-size: 9.4px; font-weight: 600; color: #0d9488; border-bottom: 2px solid #0f766e; line-height: 13px; padding-bottom: 1px; }
.news-empty { display: flex; flex-direction: column; align-items: center; padding: 39px 2px 0 0; }
.ghost-circle { width: 53px; height: 53px; border-radius: 50%; background: #f7f8f9; display: flex; align-items: center; justify-content: center; }
.ghost { width: 16px; height: 21px; fill: #d1d5db; }
.empty-text { font-size: 12.8px; color: #9ca3af; margin-top: 16px; line-height: 18px; }
.empty-link { font-size: 11.1px; font-weight: 600; color: #0d9488; margin-top: 14px; line-height: 16px; }
.arrow { font-family: "Liberation Sans", sans-serif; font-weight: 400; font-size: 9.5px; }

.aside { display: flex; flex-direction: column; gap: 20px; }
.promo {
  position: relative;
  height: 169px;
  border-radius: 16px;
  padding: 20px;
  overflow: hidden;
  background: linear-gradient(135deg, #029079 0%, #005f49 100%);
  box-shadow: 0 6px 14px rgba(0,60,50,.14);
  color: #fff;
}
.promo-title { font-size: 14.4px; font-weight: 600; line-height: 22px; margin-bottom: 7px; }
.promo-text { font-size: 10.9px; line-height: 19px; color: #b6efdc; }
.promo-btn { display: inline-flex; align-items: center; gap: 7px; height: 29px; padding: 0 12px; margin-top: 13px; border-radius: 8px; background: rgba(255,255,255,.1); border: 1px solid rgba(255,255,255,.25); font-size: 9.55px; font-weight: 600; color: #eafaf5; }
.promo-btn-ico { width: 9.5px; height: 11px; fill: currentColor; }
.promo-bulb { position: absolute; right: -30px; bottom: -30px; width: 72px; height: 96px; fill: rgba(255,255,255,.08); }

.status {
  flex: none;
  height: 190px;
  margin: 0 1px;
  background: #fff;
  border-radius: 12px;
  border: 1px solid #edf3f3;
  box-shadow: 0 1px 3px rgba(0,0,0,.04);
  padding: 18px 20px 18px 19px;
}
.status-head { display: flex; align-items: center; justify-content: space-between; height: 18px; margin-bottom: 6px; }
.status-title { font-size: 11px; font-weight: 600; color: #374151; }
.status-dot { width: 7px; height: 7px; border-radius: 50%; background: #4ade80; }
.status-row { display: flex; justify-content: space-between; align-items: center; height: 41px; border-bottom: 1px solid #f3f4f6; font-size: 9.6px; }
.status-row:last-child { border-bottom: 0; }
.status-key { color: #6b7280; }
.status-val { font-weight: 600; color: #1f2937; }

.scrollbar { flex: none; width: 9px; height: 100vh; background: #fff; display: flex; flex-direction: column; align-items: center; padding-top: 5px; }
.scroll-up { width: 0; height: 0; border-left: 4px solid transparent; border-right: 4px solid transparent; border-bottom: 5px solid #8a8a8a; margin-bottom: 5px; }
.scroll-thumb { width: 8px; height: 806px; background: #8d8d8d; border-radius: 4px; }

.cursor { position: fixed; left: 689px; top: 211px; width: 13px; height: 16px; }
```
